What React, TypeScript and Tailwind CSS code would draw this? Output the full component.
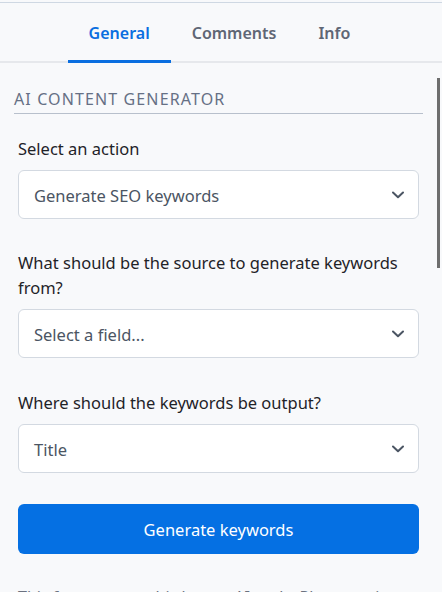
import React from "react";

function Chevron() {
  return (
    <svg width="12" height="8" viewBox="0 0 12 8" fill="none" className="shrink-0">
      <path d="M1 1.5 L6 6.2 L11 1.5" stroke="#4b5563" strokeWidth="2" strokeLinecap="round" strokeLinejoin="round" />
    </svg>
  );
}

function Select({ value }: { value: string }) {
  return (
    <div className="flex h-[49px] items-center justify-between rounded-[6px] border border-[#d3d9e1] bg-white pl-[15px] pr-[14px]">
      <span className="pt-[4px] text-[16.5px] text-[#4b5563]">{value}</span>
      <Chevron />
    </div>
  );
}

function Field({ label, value }: { label: string; value: string }) {
  return (
    <div className="flex flex-col">
      <div className="mb-[9px] text-[16.5px] leading-[25px] text-[#1f2328]">{label}</div>
      <Select value={value} />
    </div>
  );
}

export default function App() {
  return (
    <div
      className="relative h-[592px] w-full overflow-hidden bg-[#f8f9fb]"
      style={{ fontFamily: '"Noto Sans", "Open Sans", sans-serif' }}
    >
      <div className="pt-[2px]">
        <div className="h-px bg-[#cfd8e3]" />
      </div>
      <div className="flex h-[60px] justify-center border-b-2 border-[#e6e8ec] pr-[3px]">
        <div className="-mb-[2px] flex h-[60px] items-center border-b-[3px] border-[#0a6ee0] px-[21px] pt-[2px] text-[16px] font-semibold text-[#0a6ee0]">
          General
        </div>
        <div className="-mb-[2px] flex h-[60px] items-center border-b-[3px] border-transparent px-[21px] pt-[2px] text-[16px] font-semibold text-[#5f6675]">
          Comments
        </div>
        <div className="-mb-[2px] flex h-[60px] items-center border-b-[3px] border-transparent px-[21px] pt-[2px] text-[16px] font-semibold text-[#5f6675]">
          Info
        </div>
      </div>

      <div className="pl-[14px] pr-[19px] pt-[26px]">
        <div className="border-b border-[#b8c0cc] pb-[4px] text-[16px] leading-[20px] tracking-[0.07em] text-[#667085]">
          AI CONTENT GENERATOR
        </div>
        <div className="flex flex-col px-[4px] pt-[22px]">
          <Field label="Select an action" value="Generate SEO keywords" />
          <div className="mt-[31px]">
            <Field
              label="What should be the source to generate keywords from?"
              value="Select a field..."
            />
          </div>
          <div className="mt-[32px]">
            <Field label="Where should the keywords be output?" value="Title" />
          </div>
          <button className="mt-[31px] flex h-[50px] items-center justify-center rounded-[6px] bg-[#0570e3] pt-[3px] text-[16.5px] text-white">
            Generate keywords
          </button>
          <div className="mt-[31px] text-[16px] leading-[25px] text-[#6b7280]">
            This feature uses third-party AI tools. Please review generated content before publishing.
          </div>
        </div>
      </div>

      <div className="absolute right-[2px] top-[78px] h-[190px] w-[3px] bg-[#6e6e6e]" />
    </div>
  );
}
